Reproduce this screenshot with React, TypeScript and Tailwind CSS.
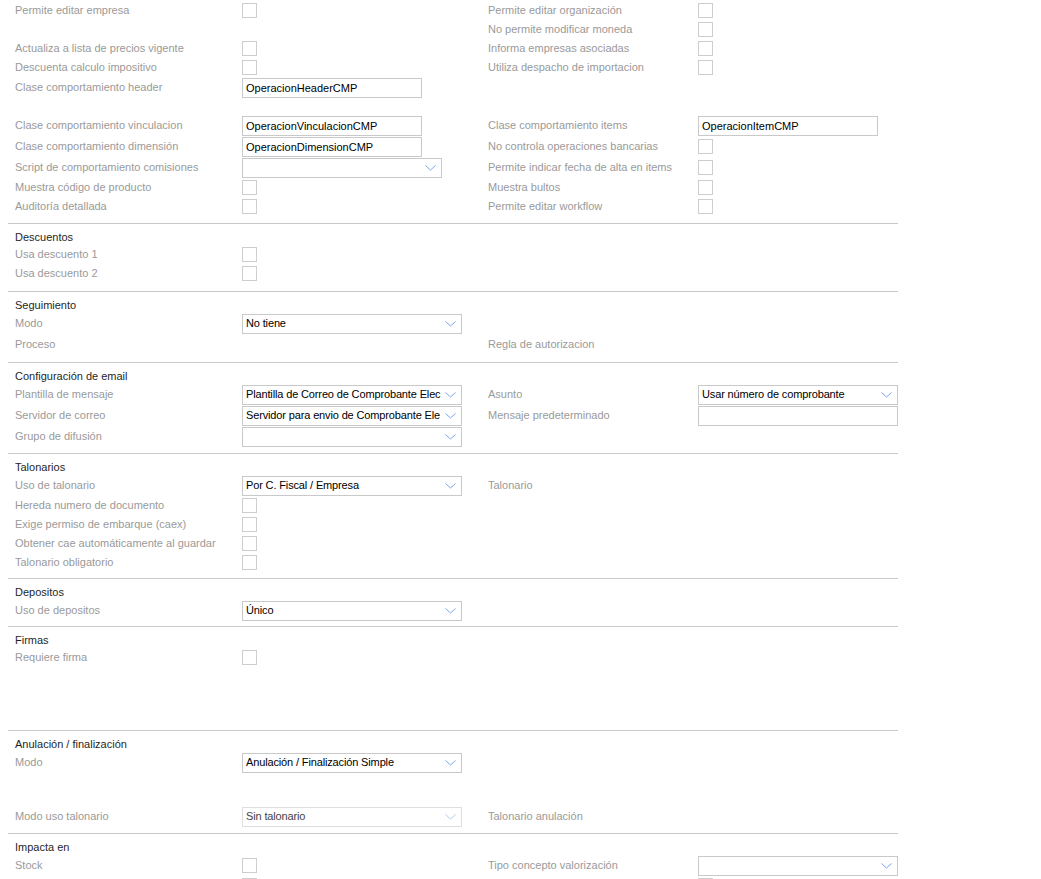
import { ReactNode } from 'react';

function Label({ children }: { children?: ReactNode }) {
  return <span className="truncate pl-[7px] text-[11px] text-[#9a9a9a]">{children}</span>;
}

function Check() {
  return <span className="block h-[15px] w-[15px] border border-[#cdcdcd] bg-white" />;
}

function TextInput({ value = '', w = 'w-[180px]' }: { value?: string; w?: string }) {
  return (
    <div className={`${w} h-[20px] border border-[#c9c9c9] bg-white px-[3px] text-[11px] leading-[18px] text-black`}>
      {value}
    </div>
  );
}

function Chevron({ light }: { light?: boolean }) {
  return (
    <svg width="11" height="6" viewBox="0 0 11 6" className="shrink-0">
      <polyline
        points="0.5,0.5 5.5,5 10.5,0.5"
        fill="none"
        stroke={light ? '#b3cbf2' : '#78a3ee'}
        strokeWidth="1"
      />
    </svg>
  );
}

function Select({ value = '', w = 'w-[220px]', disabled }: { value?: string; w?: string; disabled?: boolean }) {
  return (
    <div
      className={`${w} flex h-[20px] items-center border bg-white pl-[3px] pr-[5px] text-[11px] ${
        disabled ? 'border-[#dedede] text-[#444]' : 'border-[#c9c9c9] text-black'
      }`}
    >
      <span className="min-w-0 flex-1 overflow-hidden whitespace-nowrap tracking-[-0.14px]">{value}</span>
      <span className="pl-[3px]">
        <Chevron light={disabled} />
      </span>
    </div>
  );
}

function Row({
  l,
  lc,
  r,
  rc,
  h = 'h-[19px]',
}: {
  l?: string;
  lc?: ReactNode;
  r?: string;
  rc?: ReactNode;
  h?: string;
}) {
  return (
    <div className={`grid grid-cols-[234px_246px_210px_200px] items-center ${h}`}>
      <Label>{l}</Label>
      <div>{lc}</div>
      <span className="truncate text-[11px] text-[#9a9a9a]">{r}</span>
      <div>{rc}</div>
    </div>
  );
}

function Section({ title, pb, children }: { title: string; pb: string; children: ReactNode }) {
  return (
    <section className={`border-t border-[#c9c9c9] pt-[5px] ${pb}`}>
      <h3 className="h-[16px] pl-[7px] text-[11px] leading-[16px] text-[#1f1f1f]">{title}</h3>
      {children}
    </section>
  );
}

export default function App() {
  return (
    <div className="min-h-screen bg-white font-['Liberation_Sans',Arial,sans-serif]">
      <div className="ml-[8px] w-[890px]">
        {/* General options */}
        <div className="pt-[1px] pb-[7px]">
          <Row l="Permite editar empresa" lc={<Check />} r="Permite editar organización" rc={<Check />} />
          <Row r="No permite modificar moneda" rc={<Check />} />
          <Row l="Actualiza a lista de precios vigente" lc={<Check />} r="Informa empresas asociadas" rc={<Check />} />
          <Row l="Descuenta calculo impositivo" lc={<Check />} r="Utiliza despacho de importacion" rc={<Check />} />
          <Row h="h-[21px]" l="Clase comportamiento header" lc={<TextInput value="OperacionHeaderCMP" />} />
          <div className="h-[17px]" />
          <Row
            h="h-[21px]"
            l="Clase comportamiento vinculacion"
            lc={<TextInput value="OperacionVinculacionCMP" />}
            r="Clase comportamiento items"
            rc={<TextInput value="OperacionItemCMP" />}
          />
          <Row
            h="h-[21px]"
            l="Clase comportamiento dimensión"
            lc={<TextInput value="OperacionDimensionCMP" />}
            r="No controla operaciones bancarias"
            rc={<Check />}
          />
          <Row
            h="h-[21px]"
            l="Script de comportamiento comisiones"
            lc={<Select w="w-[200px]" />}
            r="Permite indicar fecha de alta en items"
            rc={<Check />}
          />
          <Row l="Muestra código de producto" lc={<Check />} r="Muestra bultos" rc={<Check />} />
          <Row l="Auditoría detallada" lc={<Check />} r="Permite editar workflow" rc={<Check />} />
        </div>

        <Section title="Descuentos" pb="pb-[8px]">
          <Row l="Usa descuento 1" lc={<Check />} />
          <Row l="Usa descuento 2" lc={<Check />} />
        </Section>

        <Section title="Seguimiento" pb="pb-[7px]">
          <Row h="h-[21px]" l="Modo" lc={<Select value="No tiene" />} />
          <Row h="h-[21px]" l="Proceso" r="Regla de autorizacion" />
        </Section>

        <Section title="Configuración de email" pb="pb-[6px]">
          <Row
            h="h-[21px]"
            l="Plantilla de mensaje"
            lc={<Select value="Plantilla de Correo de Comprobante Elec" />}
            r="Asunto"
            rc={<Select w="w-[200px]" value="Usar número de comprobante" />}
          />
          <Row
            h="h-[21px]"
            l="Servidor de correo"
            lc={<Select value="Servidor para envio de Comprobante Ele" />}
            r="Mensaje predeterminado"
            rc={<TextInput w="w-[200px]" />}
          />
          <Row h="h-[21px]" l="Grupo de difusión" lc={<Select />} />
        </Section>

        <Section title="Talonarios" pb="pb-[6px]">
          <Row h="h-[21px]" l="Uso de talonario" lc={<Select value="Por C. Fiscal / Empresa" />} r="Talonario" />
          <Row l="Hereda numero de documento" lc={<Check />} />
          <Row l="Exige permiso de embarque (caex)" lc={<Check />} />
          <Row l="Obtener cae automáticamente al guardar" lc={<Check />} />
          <Row l="Talonario obligatorio" lc={<Check />} />
        </Section>

        <Section title="Depositos" pb="pb-[5px]">
          <Row h="h-[21px]" l="Uso de depositos" lc={<Select value="Único" />} />
        </Section>

        <Section title="Firmas" pb="pb-[6px]">
          <Row l="Requiere firma" lc={<Check />} />
          <div className="h-[57px]" />
        </Section>

        <Section title="Anulación / finalización" pb="pb-[6px]">
          <Row h="h-[21px]" l="Modo" lc={<Select value="Anulación / Finalización Simple" />} />
          <div className="h-[33px]" />
          <Row
            h="h-[21px]"
            l="Modo uso talonario"
            lc={<Select value="Sin talonario" disabled />}
            r="Talonario anulación"
          />
        </Section>

        <Section title="Impacta en" pb="pb-[6px]">
          <Row h="h-[21px]" l="Stock" lc={<Check />} r="Tipo concepto valorización" rc={<Select w="w-[200px]" />} />
          <Row lc={<Check />} rc={<Check />} />
        </Section>
      </div>
    </div>
  );
}
